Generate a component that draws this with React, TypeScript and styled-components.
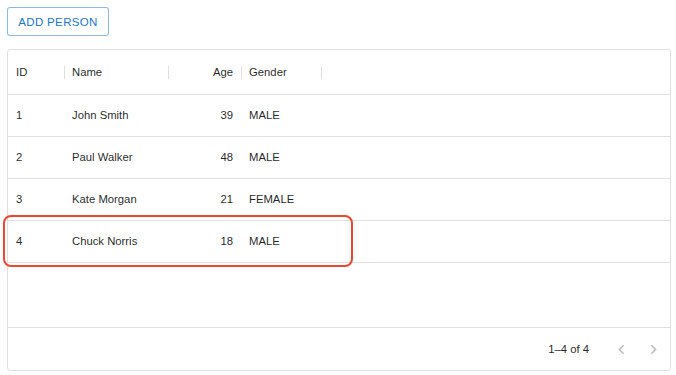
import React from 'react';
import styled, {createGlobalStyle} from "styled-components";

type Person = {id: number; name: string; age: number; gender: string};

const people: Person[] = [
    {id: 1, name: "John Smith", age: 39, gender: "MALE"},
    {id: 2, name: "Paul Walker", age: 48, gender: "MALE"},
    {id: 3, name: "Kate Morgan", age: 21, gender: "FEMALE"},
    {id: 4, name: "Chuck Norris", age: 18, gender: "MALE"},
];

const columns = [
    {key: "id", title: "ID", width: 57, right: false, inset: 8},
    {key: "name", title: "Name", width: 104, right: false, inset: 7},
    {key: "age", title: "Age", width: 73, right: true, inset: 7},
    {key: "gender", title: "Gender", width: 80, right: false, inset: 7},
] as const;

const ArrowLeft = () => (
    <svg width="19" height="19" viewBox="0 0 24 24" fill="currentColor">
        <path d="M15.41 16.59 10.83 12l4.58-4.59L14 6l-6 6 6 6 1.41-1.41z"/>
    </svg>
);

const ArrowRight = () => (
    <svg width="19" height="19" viewBox="0 0 24 24" fill="currentColor">
        <path d="M8.59 16.59 13.17 12 8.59 7.41 10 6l6 6-6 6-1.41-1.41z"/>
    </svg>
);

export default function App() {
    return (
        <>
            <GlobalStyle/>
            <Page>
                <AddButton>Add person</AddButton>
                <Grid>
                    <HeaderRow>
                        {columns.map(c => (
                            <HeaderCell key={c.key} $width={c.width}>
                                <Title $right={c.right} $inset={c.inset}>{c.title}</Title>
                                <Separator/>
                            </HeaderCell>
                        ))}
                    </HeaderRow>
                    {people.map(p => (
                        <Row key={p.id}>
                            {columns.map(c => (
                                <Cell key={c.key} $width={c.width} $right={c.right} $inset={c.inset}>
                                    {p[c.key]}
                                </Cell>
                            ))}
                        </Row>
                    ))}
                    <Filler/>
                    <Footer>
                        <Count>1–4 of 4</Count>
                        <Actions>
                            <PageButton disabled><ArrowLeft/></PageButton>
                            <PageButton disabled><ArrowRight/></PageButton>
                        </Actions>
                    </Footer>
                    <Highlight/>
                </Grid>
            </Page>
        </>
    );
}

const GlobalStyle = createGlobalStyle`
  body {
    margin: 0;
    font-family: "Liberation Sans", Arial, sans-serif;
    color: rgba(0, 0, 0, 0.87);
    background: #fff;
  }
`

const Page = styled.div`
  width: 676px;
  height: 375px;
  box-sizing: border-box;
  padding: 7px 5px 0 7px;
  display: flex;
  flex-direction: column;
  align-items: flex-start;
`

const AddButton = styled.button`
  height: 29px;
  width: 102px;
  padding: 0;
  background: #fff;
  border: 1px solid rgba(25, 118, 210, 0.5);
  border-radius: 3px;
  color: #1976d2;
  font-family: "Liberation Sans", Arial, sans-serif;
  font-size: 11.5px;
  font-weight: 500;
  letter-spacing: 0.35px;
  text-transform: uppercase;
`

const Grid = styled.div`
  position: relative;
  margin-top: 13px;
  width: 664px;
  height: 322px;
  box-sizing: border-box;
  border: 1px solid #e0e0e0;
  border-radius: 3px;
  display: flex;
  flex-direction: column;
  font-size: 11.3px;
`

const HeaderRow = styled.div`
  display: flex;
  height: 44px;
  border-bottom: 1px solid #e0e0e0;
`

const HeaderCell = styled.div<{$width: number}>`
  width: ${p => p.$width}px;
  display: flex;
  align-items: center;
`

const Title = styled.span<{$right: boolean; $inset: number}>`
  flex: 1;
  padding: 0 8px 0 ${p => p.$inset}px;
  text-align: ${p => p.$right ? "right" : "left"};
`

const Separator = styled.span`
  width: 1px;
  height: 13px;
  background: #e0e0e0;
`

const Row = styled.div`
  display: flex;
  height: 42px;
  box-sizing: border-box;
  padding-bottom: 1px;
  border-bottom: 1px solid #e0e0e0;
  align-items: center;
`

const Cell = styled.div<{$width: number; $right: boolean; $inset: number}>`
  width: ${p => p.$width}px;
  box-sizing: border-box;
  padding: 0 ${p => p.$right ? 9 : 8}px 0 ${p => p.$inset}px;
  text-align: ${p => p.$right ? "right" : "left"};
`

const Filler = styled.div`
  flex: 1;
`

const Footer = styled.div`
  height: 42px;
  border-top: 1px solid #e0e0e0;
  display: flex;
  align-items: center;
  justify-content: flex-end;
  padding-right: 1px;
`

const Count = styled.span`
  margin-right: 16px;
`

const Actions = styled.div`
  display: flex;
`

const PageButton = styled.button`
  width: 32px;
  height: 32px;
  padding: 0;
  border: none;
  background: none;
  display: flex;
  align-items: center;
  justify-content: center;
  color: rgba(0, 0, 0, 0.26);
`

const Highlight = styled.div`
  position: absolute;
  left: -5px;
  top: 165px;
  width: 350px;
  height: 52px;
  box-sizing: border-box;
  border: 2px solid #ef4630;
  border-radius: 8px;
  pointer-events: none;
`
